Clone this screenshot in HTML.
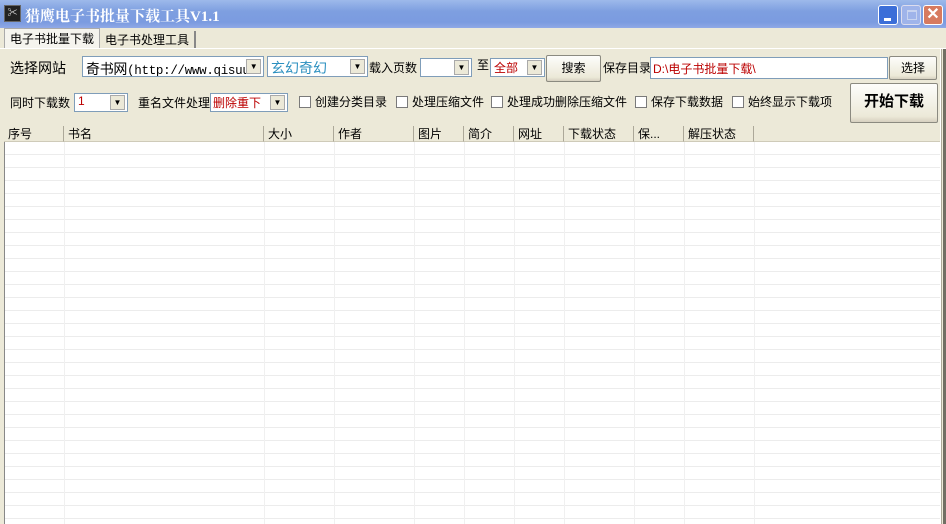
<!DOCTYPE html><html><head><meta charset="utf-8"><style>
*{margin:0;padding:0;box-sizing:border-box}
body{width:946px;height:524px;overflow:hidden;background:#ECE9D8;font-family:"Liberation Sans","Noto Sans CJK SC",sans-serif;font-size:12px;color:#000;position:relative}
.a{position:absolute;white-space:nowrap}
.tb{left:0;top:0;width:946px;height:28px;background:linear-gradient(#9db9eb,#7e9fe0 40%,#7b9be0 80%,#90a9e6)}
.box{background:#fff;border:1px solid #7f9db9}
.dd{position:absolute;top:2px;right:2px;width:15px;height:15px;background:#ECE9D8;border:1px solid #aaa;font-size:8px;text-align:center;line-height:13px;color:#000}
.btn{background:linear-gradient(#fdfdfb,#ece9d8 85%,#d6d0c0);border:1px solid #8b8a80;border-radius:2px;text-align:center}
.cb{width:12px;height:12px;background:#fff;border:1px solid #7a7a7a}
.grid{left:4px;top:126px;width:936px;height:398px;background:#fff;background-image:repeating-linear-gradient(#fff 0 12px,#ececec 12px 13px);background-position:0 16px;border-left:1px solid #888}
.h{top:126px;height:16px;border-right:1px solid #aca899;background:#ECE9D8;padding-left:4px;line-height:16px;border-bottom:1px solid #cfcbb9}
.vl{top:142px;width:1px;height:382px;background:#f0f0f0}
</style></head><body>
<div class="a tb"></div>
<div class="a" style="left:4px;top:5px;width:17px;height:17px;background:#222;border:1px solid #666;color:#ddd;font-size:10px;text-align:center;line-height:15px">✂</div>
<div class="a" style="left:25px;top:5px;color:#fff;font-weight:bold;font-size:15px;font-family:'Liberation Serif','Noto Serif CJK SC',serif">猎鹰电子书批量下载工具V1.1</div>
<div class="a" style="left:878px;top:5px;width:20px;height:20px;background:#3b6ed8;border:1px solid #fff;border-radius:3px"><div style="position:absolute;left:5px;top:12px;width:7px;height:3px;background:#fff"></div></div>
<div class="a" style="left:901px;top:5px;width:20px;height:20px;background:#9fb4ea;border:1px solid #dde;border-radius:3px"><div style="position:absolute;left:5px;top:4px;width:10px;height:10px;border:1px solid #c8d4f0;border-top-width:2px"></div></div>
<div class="a" style="left:923px;top:5px;width:20px;height:20px;background:#d77a5f;border:1px solid #fff;border-radius:3px;color:#fff;font-weight:bold;font-size:16px;text-align:center;line-height:18px">✕</div>
<div class="a" style="left:4px;top:28px;width:96px;height:20px;background:#f5f4ee;border:1px solid #aaa;border-bottom:none;padding:1px 5px">电子书批量下载</div>
<div class="a" style="left:100px;top:31px;width:96px;height:17px;border-right:2px solid #888;padding:0 5px">电子书处理工具</div>
<div class="a" style="left:0;top:48px;width:946px;height:1px;background:#fff"></div>
<div class="a" style="left:10px;top:58px;font-size:14px">选择网站</div>
<div class="a box" style="left:82px;top:56px;width:182px;height:21px;padding:2px 3px;font-size:14px;overflow:hidden;letter-spacing:-0.3px">奇书网<span style="font-family:'Liberation Mono',monospace;font-size:12.5px">(http://www.qisuu</span><div class="dd">▼</div></div>
<div class="a box" style="left:267px;top:56px;width:101px;height:21px;padding:1px 3px;font-size:14px;color:#2a8fbf">玄幻奇幻<div class="dd">▼</div></div>
<div class="a" style="left:369px;top:59px">载入页数</div>
<div class="a box" style="left:420px;top:58px;width:52px;height:19px"><div class="dd" style="top:1px">▼</div></div>
<div class="a" style="left:477px;top:56px">至</div>
<div class="a box" style="left:490px;top:58px;width:55px;height:19px;padding:0 3px;color:#b00">全部<div class="dd" style="top:1px">▼</div></div>
<div class="a btn" style="left:546px;top:55px;width:55px;height:27px;line-height:25px">搜索</div>
<div class="a" style="left:603px;top:59px">保存目录</div>
<div class="a box" style="left:650px;top:57px;width:238px;height:22px;padding:2px 2px;color:#b00">D:\电子书批量下载\</div>
<div class="a btn" style="left:889px;top:56px;width:48px;height:24px;line-height:22px">选择</div>
<div class="a" style="left:10px;top:94px">同时下载数</div>
<div class="a box" style="left:74px;top:93px;width:54px;height:19px;padding:0 3px;color:#b00">1<div class="dd" style="top:1px">▼</div></div>
<div class="a" style="left:138px;top:94px">重名文件处理</div>
<div class="a box" style="left:210px;top:93px;width:78px;height:19px;padding:0 2px;color:#b00">删除重下<div class="dd" style="top:1px">▼</div></div>
<div class="a cb" style="left:299px;top:96px"></div><div class="a" style="left:315px;top:93px">创建分类目录</div>
<div class="a cb" style="left:396px;top:96px"></div><div class="a" style="left:412px;top:93px">处理压缩文件</div>
<div class="a cb" style="left:491px;top:96px"></div><div class="a" style="left:507px;top:93px">处理成功删除压缩文件</div>
<div class="a cb" style="left:635px;top:96px"></div><div class="a" style="left:651px;top:93px">保存下载数据</div>
<div class="a cb" style="left:732px;top:96px"></div><div class="a" style="left:748px;top:93px">始终显示下载项</div>
<div class="a btn" style="left:850px;top:83px;width:88px;height:40px;line-height:36px;font-size:15px;font-weight:bold">开始下载</div>
<div class="a" style="left:940px;top:49px;width:2px;height:475px;background:#fff;border-right:1px solid #aca899"></div>
<div class="a" style="left:943px;top:49px;width:3px;height:475px;background:#716f64"></div>
<div class="a grid"></div>
<div class="a h" style="left:4px;width:60px">序号</div>
<div class="a h" style="left:64px;width:200px">书名</div>
<div class="a h" style="left:264px;width:70px">大小</div>
<div class="a h" style="left:334px;width:80px">作者</div>
<div class="a h" style="left:414px;width:50px">图片</div>
<div class="a h" style="left:464px;width:50px">简介</div>
<div class="a h" style="left:514px;width:50px">网址</div>
<div class="a h" style="left:564px;width:70px">下载状态</div>
<div class="a h" style="left:634px;width:50px">保...</div>
<div class="a h" style="left:684px;width:70px">解压状态</div>
<div class="a h" style="left:754px;width:186px;border-right:none"></div>
<div class="a vl" style="left:64px"></div><div class="a vl" style="left:264px"></div><div class="a vl" style="left:334px"></div><div class="a vl" style="left:414px"></div><div class="a vl" style="left:464px"></div><div class="a vl" style="left:514px"></div><div class="a vl" style="left:564px"></div><div class="a vl" style="left:634px"></div><div class="a vl" style="left:684px"></div><div class="a vl" style="left:754px"></div>
</body></html>
